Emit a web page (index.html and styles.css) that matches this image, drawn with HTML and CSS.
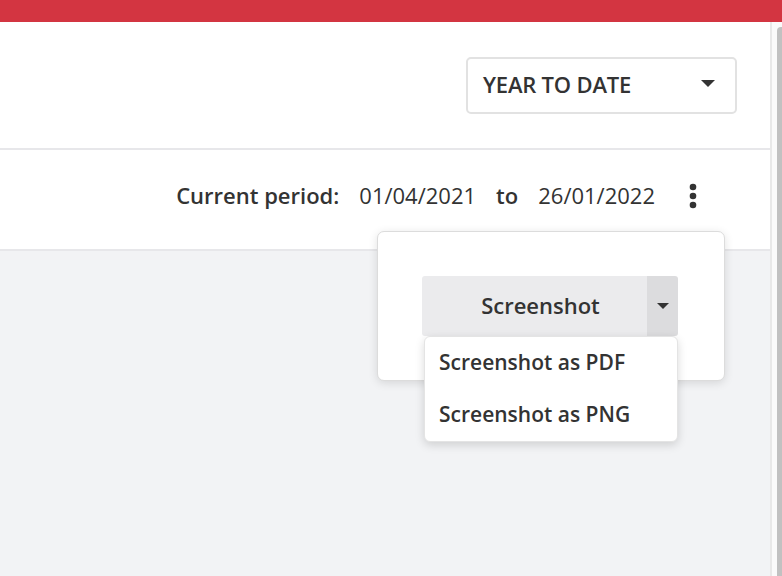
FILE: index.html
```html
<!DOCTYPE html>
<html>
<head>
<meta charset="utf-8">
<link rel="stylesheet" href="styles.css">
</head>
<body>
<div class="topbar"></div>
<div class="frame">
  <div class="main">
    <section class="filter-row">
      <div class="select">
        <span class="select-label">YEAR TO DATE</span>
        <span class="caret"></span>
      </div>
    </section>
    <section class="period-row">
      <span class="period-label">Current period:</span>
      <span class="period-date">01/04/2021</span>
      <span class="period-to">to</span>
      <span class="period-date">26/01/2022</span>
      <button class="kebab" aria-label="More">
        <svg width="8" height="26" viewBox="0 0 8 26"><circle cx="4" cy="4" r="3.3" fill="#333"/><circle cx="4" cy="13" r="3.3" fill="#333"/><circle cx="4" cy="22" r="3.3" fill="#333"/></svg>
      </button>
      <div class="popover">
        <div class="split">
          <span class="split-main">Screenshot</span>
          <span class="split-toggle"><span class="caret small"></span></span>
        </div>
        <ul class="menu">
          <li>Screenshot as PDF</li>
          <li>Screenshot as PNG</li>
        </ul>
      </div>
    </section>
    <section class="content"></section>
  </div>
  <div class="scrollbar"><div class="thumb"></div></div>
</div>
</body>
</html>
```
FILE: styles.css
```css
* { box-sizing: border-box; }
html, body { margin: 0; height: 100%; }
body {
  font-family: "Open Sans", "Liberation Sans", sans-serif;
  color: #333;
  background: #f2f3f5;
  overflow: hidden;
}
.topbar { height: 22px; background: #d33541; }
.frame { display: flex; height: 554px; }
.main { flex: 1; display: flex; flex-direction: column; }
.filter-row {
  height: 128px;
  background: #fff;
  border-bottom: 2px solid #e7e7ea;
  display: flex;
  align-items: center;
  justify-content: flex-end;
  padding-right: 33px;
}
.select {
  width: 271px;
  height: 57px;
  border: 2px solid #e2e2e2;
  border-radius: 5px;
  display: flex;
  align-items: center;
  justify-content: space-between;
  padding: 0 20px 3px 15px;
}
.select-label { font-size: 22px; font-weight: 600; letter-spacing: -0.2px; }
.caret {
  width: 0; height: 0;
  border-left: 7px solid transparent;
  border-right: 7px solid transparent;
  border-top: 7px solid #333;
}
.caret.small { border-left-width: 6px; border-right-width: 6px; border-top-width: 6px; }
.period-row {
  position: relative;
  height: 101px;
  background: #fff;
  border-bottom: 2px solid #e7e7ea;
  display: flex;
  align-items: center;
  justify-content: flex-end;
  padding: 0 73px 10px 0;
  font-size: 22px;
}
.period-label { font-weight: 600; margin-right: 20px; }
.period-to { font-weight: 600; margin: 0 20px; }
.kebab {
  background: none; border: 0; padding: 0;
  margin-left: 34px;
  margin-top: 2px;
  display: flex;
}
.content { flex: 1; background: #f2f3f5; }
.popover {
  position: absolute;
  left: 377px;
  top: 81px;
  width: 348px;
  height: 150px;
  background: #fff;
  border: 1px solid #dcdcdc;
  border-radius: 7px;
  box-shadow: 0 2px 10px rgba(0,0,0,0.12);
  padding: 44px 0 0 44px;
  z-index: 2;
}
.split {
  display: flex;
  width: 256px;
  height: 60px;
  border-radius: 3px;
  overflow: hidden;
}
.split-main {
  flex: 1;
  background: #ebebed;
  display: flex;
  align-items: center;
  justify-content: center;
  padding: 0 0 3px 12px;
  font-size: 22px;
  font-weight: 600;
}
.split-toggle {
  width: 31px;
  background: #dcdcde;
  display: flex;
  align-items: center;
  justify-content: center;
}
.menu {
  position: absolute;
  left: 46px;
  top: 104px;
  width: 254px;
  margin: 0;
  padding: 0;
  list-style: none;
  background: #fff;
  border: 1px solid #e4e4e4;
  border-radius: 6px;
  box-shadow: 0 3px 10px rgba(0,0,0,0.15);
}
.menu li {
  height: 52px;
  line-height: 50px;
  padding-left: 14px;
  font-size: 21px;
  font-weight: 600;
}
.scrollbar {
  width: 12px;
  background: #fafafa;
  border-left: 2px solid #e8e8e8;
  padding: 5px 0 0 5px;
}
.thumb {
  height: 100%;
  background: #c1c1c1;
  border-radius: 4px 0 0 0;
}
```
